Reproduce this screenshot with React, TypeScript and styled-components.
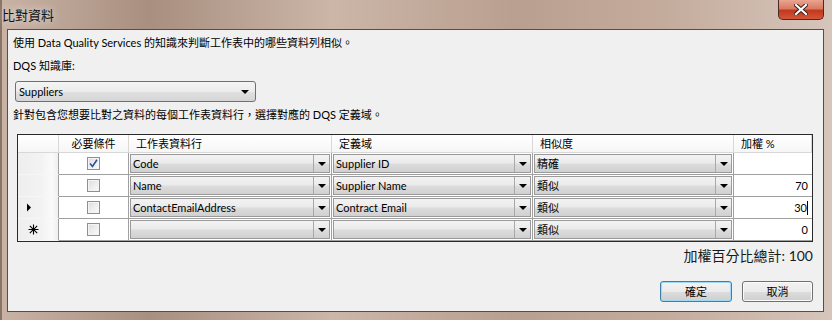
import styled, { createGlobalStyle } from "styled-components";

const GlobalStyle = createGlobalStyle`
    html, body {
        margin: 0;
        padding: 0;
        width: 832px;
        height: 320px;
        overflow: hidden;
    }
    body {
        font-family: "Lato", "Noto Sans CJK TC", sans-serif;
        font-size: 11px;
        color: #000;
    }
`;

const Window = styled.div`
    width: 832px;
    height: 320px;
    box-sizing: border-box;
    display: flex;
    flex-direction: column;
    padding: 0 8px 8px 7px;
    background: linear-gradient(90deg, #c9b3a5 0%, #a88f80 18%, #cbb6a8 40%, #b99f8f 62%, #c4ac9d 80%, #d6c5ba 100%);
    box-shadow: inset 2px 0 0 #8a7465;
`;

const TitleBar = styled.div`
    height: 29px;
    display: flex;
    justify-content: space-between;
    align-items: flex-start;
`;

const Title = styled.div`
    padding: 6px 0 0 0;
    margin-left: -5px;
    font-size: 13px;
    line-height: 18px;
    color: #111;
    text-shadow: 0 0 8px rgba(255, 255, 255, 0.8);
`;

const CloseButton = styled.div`
    width: 46px;
    height: 20px;
    box-sizing: border-box;
    border: 1px solid #4a2a22;
    border-top: none;
    border-radius: 0 0 5px 5px;
    background: linear-gradient(#e9a590 0%, #d97a62 45%, #c2391f 55%, #d4553a 100%);
    display: flex;
    align-items: center;
    justify-content: center;
`;

const Content = styled.div`
    flex: 1;
    box-sizing: border-box;
    border: 1px solid #5c4d44;
    background: #f0f0f0;
    padding: 5px 10px 0 5px;
    display: flex;
    flex-direction: column;
`;

const Line = styled.div<{ $top: number }>`
    margin-top: ${(p) => p.$top}px;
    height: 16px;
    line-height: 16px;
    white-space: nowrap;
`;

const Combo = styled.div`
    margin: 7px 0 0 2px;
    width: 241px;
    height: 21px;
    box-sizing: border-box;
    border: 1px solid #707070;
    border-radius: 3px;
    background: linear-gradient(#f4f4f4 0%, #ececec 50%, #e0e0e0 51%, #d6d6d6 100%);
    display: flex;
    align-items: center;
    padding: 0 6px 0 3px;
`;

const ComboText = styled.span`
    flex: 1;
`;

const Arrow = styled.span`
    width: 0;
    height: 0;
    border-left: 4px solid transparent;
    border-right: 4px solid transparent;
    border-top: 4px solid #000;
`;

const Grid = styled.div`
    margin: 11px 0 0 4px;
    width: 796px;
    height: 108px;
    box-sizing: border-box;
    border: 1px solid #2a2a2a;
    background: #fff;
    display: grid;
    grid-template-columns: 41px 70px 203px 201px 201px 1fr;
    grid-template-rows: 18px repeat(4, 22px);
`;

const HeadCell = styled.div<{ $center?: boolean }>`
    box-sizing: border-box;
    border-right: 1px solid #d8d8d8;
    border-bottom: 1px solid #d8d8d8;
    background: linear-gradient(#ffffff, #f6f6f6);
    padding-left: ${(p) => (p.$center ? 0 : 7)}px;
    text-align: ${(p) => (p.$center ? "center" : "left")};
    line-height: 17px;
    white-space: nowrap;
    &:last-child {
        border-right: none;
    }
`;

const RowHead = styled.div`
    box-sizing: border-box;
    border-right: 1px solid #a0a0a0;
    border-bottom: 1px solid #f6f6f6;
    background: linear-gradient(90deg, #eeeeee 0%, #f3f3f3 60%, #fafafa 85%, #efefef 100%);
    display: flex;
    align-items: center;
    padding-left: 8px;
`;

const CheckCell = styled.div`
    box-sizing: border-box;
    border-right: 1px solid #a0a0a0;
    border-bottom: 1px solid #a0a0a0;
    display: flex;
    align-items: center;
    justify-content: center;
`;

const Check = styled.div`
    width: 13px;
    height: 13px;
    box-sizing: border-box;
    border: 1px solid #8e8f8f;
    background: linear-gradient(135deg, #dcdcdc 0%, #f0f0f0 60%, #fbfbfb 100%);
    box-shadow: inset 0 0 0 1px #f4f4f4;
    display: flex;
    align-items: center;
    justify-content: center;
`;

const ComboCell = styled.div`
    box-sizing: border-box;
    border-right: 1px solid #a0a0a0;
    border-bottom: 1px solid #a0a0a0;
    padding: 1px;
    display: flex;
`;

const CellBox = styled.div`
    flex: 1;
    display: flex;
    box-sizing: border-box;
    border: 1px solid #9a9a9a;
    background: linear-gradient(#f3f3f3 0%, #ebebeb 45%, #dcdcdc 55%, #d0d0d0 100%);
`;

const CellText = styled.div`
    flex: 1;
    padding-left: 2px;
    line-height: 18px;
    white-space: nowrap;
    overflow: hidden;
`;

const DropButton = styled.div`
    width: 16px;
    box-sizing: border-box;
    border-left: 1px solid #a8a8a8;
    display: flex;
    align-items: center;
    justify-content: center;
`;

const WeightCell = styled.div`
    box-sizing: border-box;
    border-bottom: 1px solid #a0a0a0;
    text-align: right;
    padding-right: 4px;
    line-height: 21px;
`;

const Caret = styled.span`
    display: inline-block;
    width: 1px;
    height: 14px;
    background: #000;
    vertical-align: -3px;
`;

const Total = styled.div`
    margin-top: 5px;
    text-align: right;
    font-size: 14px;
    line-height: 18px;
    color: #1a1a1a;
`;

const ButtonRow = styled.div`
    margin-top: 16px;
    display: flex;
    justify-content: flex-end;
    gap: 10px;
`;

const Button = styled.div<{ $default?: boolean }>`
    width: ${(p) => (p.$default ? 72 : 71)}px;
    height: 21px;
    box-sizing: border-box;
    border: 1px solid ${(p) => (p.$default ? "#3c7fb1" : "#707070")};
    border-radius: 3px;
    background: linear-gradient(#f2f2f2 0%, #ebebeb 50%, #dddddd 51%, #cfcfcf 100%);
    box-shadow: ${(p) => (p.$default ? "inset 0 0 0 1px #9fd8f5" : "inset 0 0 0 1px #fbfbfb")};
    text-align: center;
    line-height: 19px;
`;

const rows = [
    { checked: true, col: "Code", domain: "Supplier ID", sim: "精確", weight: "", mark: "" },
    { checked: false, col: "Name", domain: "Supplier Name", sim: "類似", weight: "70", mark: "" },
    { checked: false, col: "ContactEmailAddress", domain: "Contract Email", sim: "類似", weight: "30", mark: "current" },
    { checked: false, col: "", domain: "", sim: "類似", weight: "0", mark: "new" },
];

const ComboField = ({ text }: { text: string }) => (
    <ComboCell>
        <CellBox>
            <CellText>{text}</CellText>
            <DropButton>
                <Arrow />
            </DropButton>
        </CellBox>
    </ComboCell>
);

const RowMark = ({ mark }: { mark: string }) => {
    if (mark === "current") {
        return (
            <svg width="6" height="9" viewBox="0 0 6 9">
                <path d="M1 0.5 L5 4.5 L1 8.5 Z" fill="#000" />
            </svg>
        );
    }
    if (mark === "new") {
        return (
            <svg width="11" height="11" viewBox="0 0 11 11" style={{ marginLeft: 2 }}>
                <path d="M5.5 0.5 V10.5 M0.5 5.5 H10.5 M1.8 1.8 L9.2 9.2 M9.2 1.8 L1.8 9.2" stroke="#000" strokeWidth="1.1" />
            </svg>
        );
    }
    return null;
};

export default function App() {
    return (
        <>
            <GlobalStyle />
            <Window>
                <TitleBar>
                    <Title>比對資料</Title>
                    <CloseButton>
                        <svg width="14" height="11" viewBox="0 0 14 11">
                            <path d="M2 1 L12 10 M12 1 L2 10" stroke="#3a1a14" strokeWidth="4" strokeLinecap="square" />
                            <path d="M2 1 L12 10 M12 1 L2 10" stroke="#fff" strokeWidth="2.2" strokeLinecap="square" />
                        </svg>
                    </CloseButton>
                </TitleBar>
                <Content>
                    <Line $top={0}>使用 Data Quality Services 的知識來判斷工作表中的哪些資料列相似。</Line>
                    <Line $top={7}>DQS 知識庫:</Line>
                    <Combo>
                        <ComboText>Suppliers</ComboText>
                        <Arrow />
                    </Combo>
                    <Line $top={5}>針對包含您想要比對之資料的每個工作表資料行，選擇對應的 DQS 定義域。</Line>
                    <Grid>
                        <HeadCell />
                        <HeadCell $center>必要條件</HeadCell>
                        <HeadCell>工作表資料行</HeadCell>
                        <HeadCell>定義域</HeadCell>
                        <HeadCell>相似度</HeadCell>
                        <HeadCell>加權 %</HeadCell>
                        {rows.map((r, i) => (
                            <Row key={i} {...r} />
                        ))}
                    </Grid>
                    <Total>加權百分比總計: 100</Total>
                    <ButtonRow>
                        <Button $default>確定</Button>
                        <Button>取消</Button>
                    </ButtonRow>
                </Content>
            </Window>
        </>
    );
}

const Row = ({ checked, col, domain, sim, weight, mark }: (typeof rows)[number]) => (
    <>
        <RowHead>
            <RowMark mark={mark} />
        </RowHead>
        <CheckCell>
            <Check>
                {checked && (
                    <svg width="9" height="9" viewBox="0 0 9 9">
                        <path d="M1 4.5 L3.5 7.5 L8 0.8" stroke="#2c4f9e" strokeWidth="1.6" fill="none" />
                    </svg>
                )}
            </Check>
        </CheckCell>
        <ComboField text={col} />
        <ComboField text={domain} />
        <ComboField text={sim} />
        <WeightCell>
            {weight}
            {mark === "current" && <Caret />}
        </WeightCell>
    </>
);
